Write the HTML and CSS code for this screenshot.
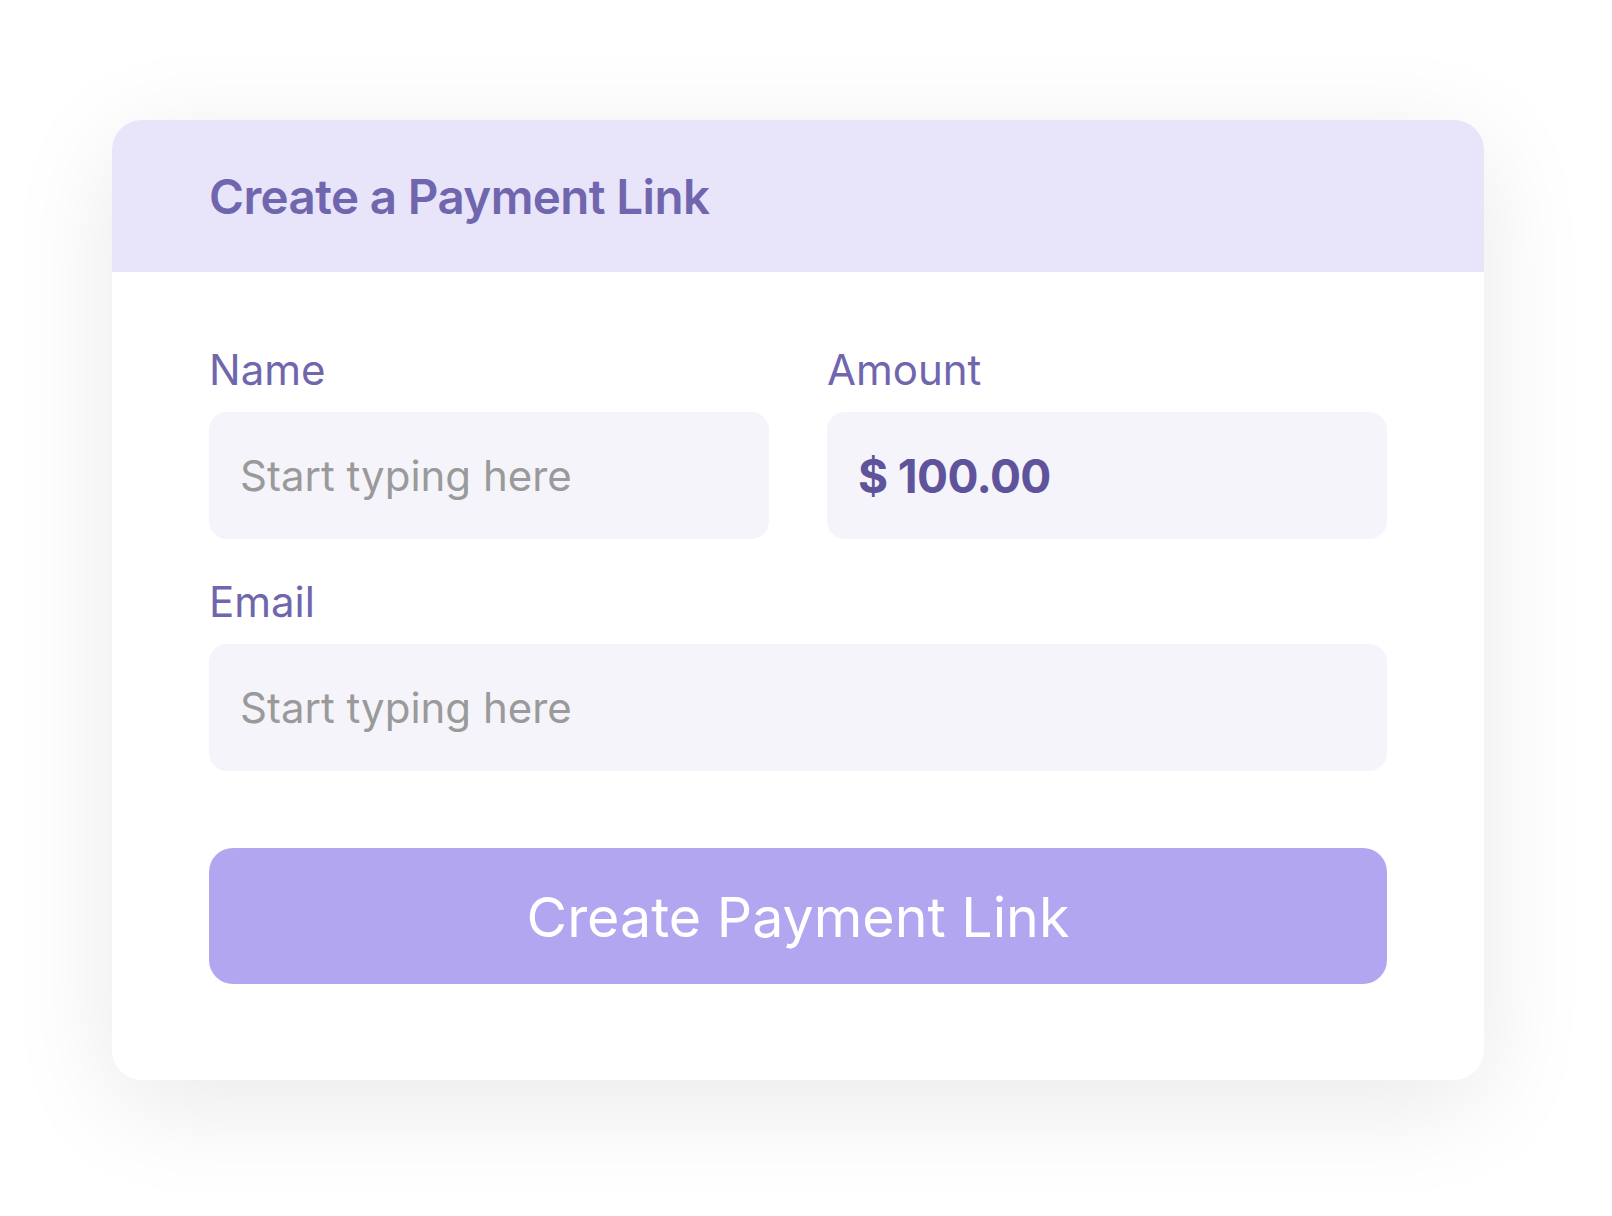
FILE: index.html
```html
<!DOCTYPE html>
<html lang="en">
<head>
    <meta charset="UTF-8">
    <meta name="viewport" content="width=device-width, initial-scale=1.0">
    <title>Create a Payment Link</title>
    <link rel="stylesheet" href="styles.css">
</head>
<body>
    <div class="card">
        <div class="card-header">
            <h1>Create a Payment Link</h1>
        </div>
        <form class="card-body">
            <div class="row">
                <div class="field">
                    <label for="name">Name</label>
                    <input type="text" id="name" placeholder="Start typing here">
                </div>
                <div class="field">
                    <label for="amount">Amount</label>
                    <input type="text" id="amount" class="amount" value="$ 100.00">
                </div>
            </div>
            <div class="field">
                <label for="email">Email</label>
                <input type="text" id="email" placeholder="Start typing here">
            </div>
            <button type="button">Create Payment Link</button>
        </form>
    </div>
</body>
</html>
```

FILE: styles.css
```css
body { margin: 0; background: #fff; font-family: Inter, "Noto Sans", sans-serif; }
.card { margin: 120px 0 136px 112px; width: 1372px; height: 960px; background: #fff; border-radius: 30px; overflow: hidden; box-shadow: 0 24px 110px rgba(0, 0, 0, 0.09); }
.card-header { height: 152px; background: #e8e4fa; display: flex; align-items: center; padding-left: 97px; }
h1 { margin: 0; font-size: 47.5px; font-weight: 600; color: #7066ad; letter-spacing: -0.6px; }
.card-body { padding: 73px 97px 0; display: flex; flex-direction: column; }
.row { display: grid; grid-template-columns: 1fr 1fr; gap: 58px; }
.field { display: flex; flex-direction: column; }
label { font-size: 42px; color: #7066ad; line-height: 50px; margin-bottom: 17px; }
input { height: 127px; border: none; border-radius: 18px; background: #f5f4fa; padding: 0 31px; font-family: inherit; font-size: 42px; color: #5f549b; outline: none; margin-bottom: 38px; box-sizing: border-box; width: 100%; }
input::placeholder { color: #9a9a9a; }
.amount { font-weight: 700; font-size: 46px; letter-spacing: -0.6px; }
button { margin-top: 39px; height: 136px; border: none; border-radius: 24px; background: #b3a6f1; color: #fff; font-family: inherit; font-size: 55.5px; }
```
